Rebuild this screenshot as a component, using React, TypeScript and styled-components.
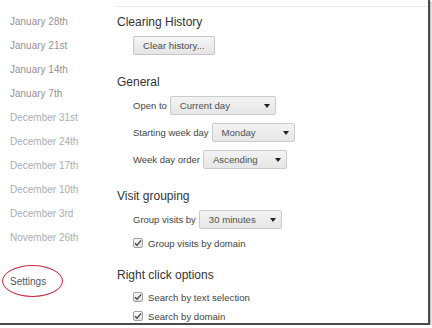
import React from 'react';
import styled, { createGlobalStyle } from 'styled-components';

const GlobalStyle = createGlobalStyle`
  html, body {
    margin: 0;
    padding: 0;
    background: #ffffff;
  }
  body {
    font-family: "Liberation Sans", Arial, sans-serif;
  }
`;

const Frame = styled.div`
  width: 428px;
  height: 323px;
  background: #ffffff;
  border-right: 2px solid #4a4a4a;
  border-bottom: 2px solid #4a4a4a;
  box-shadow: 1px 1px 2px rgba(0, 0, 0, 0.35);
  display: flex;
  overflow: hidden;
`;

const Sidebar = styled.div`
  width: 115px;
  flex-shrink: 0;
  padding-top: 10px;
  display: flex;
  flex-direction: column;
`;

const DateItem = styled.div<{ $dim: boolean }>`
  height: 24px;
  line-height: 24px;
  padding-left: 10px;
  font-size: 10px;
  color: ${props => (props.$dim ? '#adadad' : '#939393')};
  white-space: nowrap;
`;

const SettingsLink = styled.div`
  position: relative;
  margin-top: 20px;
  height: 24px;
  line-height: 24px;
  padding-left: 10px;
  font-size: 10px;
  color: #555555;
`;

const Circle = styled.span`
  position: absolute;
  left: 2px;
  top: -5px;
  width: 61px;
  height: 32px;
  border: 1.5px solid #cc2a3e;
  border-radius: 50%;
  box-sizing: border-box;
`;

const Main = styled.div`
  flex: 1;
  margin-top: 6px;
  border-top: 1px solid #ececec;
  padding-top: 7px;
  padding-left: 2px;
  display: flex;
  flex-direction: column;
`;

const Section = styled.div<{ $top: number }>`
  margin-top: ${props => props.$top}px;
  display: flex;
  flex-direction: column;
`;

const Heading = styled.div`
  height: 16px;
  line-height: 16px;
  font-size: 12px;
  color: #333333;
  margin-bottom: 6px;
`;

const Body = styled.div<{ $gap: number }>`
  padding-left: 16px;
  display: flex;
  flex-direction: column;
  align-items: flex-start;
  gap: ${props => props.$gap}px;
`;

const Button = styled.div`
  height: 19px;
  box-sizing: border-box;
  padding: 0 9px;
  line-height: 17px;
  font-size: 9.7px;
  color: #4a4a4a;
  border: 1px solid #c6c6c6;
  border-radius: 2px;
  background: linear-gradient(#f6f6f6, #e4e4e4);
`;

const Row = styled.div`
  display: flex;
  align-items: center;
  gap: 3px;
  height: 19px;
`;

const Label = styled.span`
  font-size: 9.5px;
  color: #444444;
  white-space: nowrap;
`;

const SelectBox = styled.div<{ $width: number }>`
  width: ${props => props.$width}px;
  height: 19px;
  box-sizing: border-box;
  padding: 0 5px 0 9px;
  display: flex;
  align-items: center;
  justify-content: space-between;
  font-size: 9.6px;
  color: #505050;
  border: 1px solid #cbcbcb;
  border-radius: 2px;
  background: linear-gradient(#f3f3f3, #e6e6e6);
`;

const Arrow = styled.span`
  width: 0;
  height: 0;
  border-left: 3px solid transparent;
  border-right: 3px solid transparent;
  border-top: 4px solid #222222;
`;

const CheckRow = styled.div`
  display: flex;
  align-items: center;
  gap: 5px;
  height: 16px;
  font-size: 9.6px;
  color: #444444;
`;

const CheckBox = styled.span`
  width: 10px;
  height: 10px;
  box-sizing: border-box;
  border: 1px solid #a0a0a0;
  border-radius: 2px;
  background: linear-gradient(#fbfbfb, #e2e2e2);
  display: flex;
  align-items: center;
  justify-content: center;
`;

const dates = [
  'January 28th',
  'January 21st',
  'January 14th',
  'January 7th',
  'December 31st',
  'December 24th',
  'December 17th',
  'December 10th',
  'December 3rd',
  'November 26th',
];

const Check = () => (
  <CheckBox>
    <svg width="9" height="8" viewBox="0 0 9 8">
      <path d="M1 4.2 L3.4 6.6 L8 1" stroke="#4a4a4a" strokeWidth="1.6" fill="none" />
    </svg>
  </CheckBox>
);

const Select: React.FC<{ value: string; width: number }> = ({ value, width }) => (
  <SelectBox $width={width}>
    <span>{value}</span>
    <Arrow />
  </SelectBox>
);

const App: React.FC = () => {
  return (
    <>
      <GlobalStyle />
      <Frame>
        <Sidebar>
          {dates.map(d => (
            <DateItem key={d} $dim={!d.startsWith('January')}>
              {d}
            </DateItem>
          ))}
          <SettingsLink>
            Settings
            <Circle />
          </SettingsLink>
        </Sidebar>
        <Main>
          <Section $top={0}>
            <Heading>Clearing History</Heading>
            <Body $gap={0}>
              <Button>Clear history...</Button>
            </Body>
          </Section>
          <Section $top={19}>
            <Heading>General</Heading>
            <Body $gap={8}>
              <Row>
                <Label>Open to</Label>
                <Select value="Current day" width={106} />
              </Row>
              <Row>
                <Label>Starting week day</Label>
                <Select value="Monday" width={83} />
              </Row>
              <Row>
                <Label>Week day order</Label>
                <Select value="Ascending" width={84} />
              </Row>
            </Body>
          </Section>
          <Section $top={19}>
            <Heading>Visit grouping</Heading>
            <Body $gap={6}>
              <Row>
                <Label>Group visits by</Label>
                <Select value="30 minutes" width={83} />
              </Row>
              <CheckRow>
                <Check />
                Group visits by domain
              </CheckRow>
            </Body>
          </Section>
          <Section $top={16}>
            <Heading>Right click options</Heading>
            <Body $gap={3}>
              <CheckRow>
                <Check />
                Search by text selection
              </CheckRow>
              <CheckRow>
                <Check />
                Search by domain
              </CheckRow>
            </Body>
          </Section>
        </Main>
      </Frame>
    </>
  );
};

export default App;
